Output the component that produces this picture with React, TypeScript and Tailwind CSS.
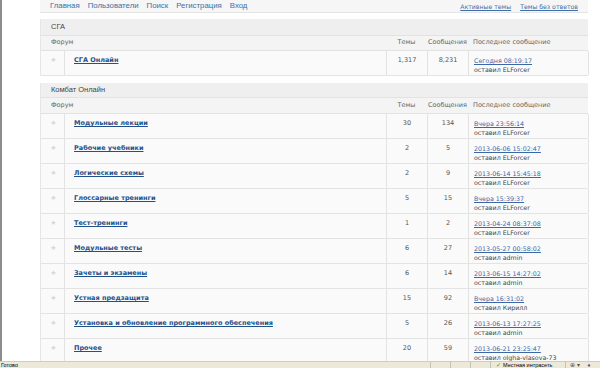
import React from "react";

type Row = { name: string; t: string; m: string; date: string; by: string };

const rows: Row[] = [
  { name: "Модульные лекции", t: "30", m: "134", date: "Вчера 23:56:14", by: "ELForcer" },
  { name: "Рабочие учебники", t: "2", m: "5", date: "2013-06-06 15:02:47", by: "ELForcer" },
  { name: "Логические схемы", t: "2", m: "9", date: "2013-06-14 15:45:18", by: "ELForcer" },
  { name: "Глоссарные тренинги", t: "5", m: "15", date: "Вчера 15:39:37", by: "ELForcer" },
  { name: "Тест-тренинги", t: "1", m: "2", date: "2013-04-24 08:37:08", by: "ELForcer" },
  { name: "Модульные тесты", t: "6", m: "27", date: "2013-05-27 00:58:02", by: "admin" },
  { name: "Зачеты и экзамены", t: "6", m: "14", date: "2013-06-15 14:27:02", by: "admin" },
  { name: "Устная предзащита", t: "15", m: "92", date: "Вчера 16:31:02", by: "Кирилл" },
  { name: "Установка и обновление программного обеспечения", t: "5", m: "26", date: "2013-06-13 17:27:25", by: "admin" },
  { name: "Прочее", t: "20", m: "59", date: "2013-06-21 23:25:47", by: "olgha-vlasova-73" },
];

const verdana = { fontFamily: '"DejaVu Sans", Verdana, sans-serif' };
const arial = { fontFamily: '"Liberation Sans", Arial, sans-serif' };

const cols = "grid grid-cols-[24px_321px_41px_41px_121px]";

function ColHeader({ h }: { h: string }) {
  return (
    <div className={`${cols} ${h} bg-[#f4f4f4] border-b border-[#e2e2e2] text-[6.5px] text-[#666] items-center`} style={verdana}>
      <div className="col-span-2 pl-[10px]">Форум</div>
      <div className="text-center">Темы</div>
      <div className="text-center whitespace-nowrap">Сообщения</div>
      <div className="pl-[5px] whitespace-nowrap">Последнее сообщение</div>
    </div>
  );
}

function ForumRow({ r }: { r: Row }) {
  return (
    <div className={`${cols} h-[25px] bg-[#fafafa] border-b border-[#e3e3e3]`} style={verdana}>
      <div className="border-r border-[#e3e3e3] flex justify-center pl-[2px] pt-[5px] text-[7px] text-[#d6d6d6] leading-[9px]">★</div>
      <div className="pl-[9px] pt-[5px] text-[6.5px] leading-[9px] font-bold text-[#24508a] underline whitespace-nowrap">{r.name}</div>
      <div className="border-l border-[#e3e3e3] text-center pt-[5px] text-[6.5px] leading-[9px] text-[#555]">{r.t}</div>
      <div className="border-l border-[#e3e3e3] text-center pt-[5px] text-[6.5px] leading-[9px] text-[#555]">{r.m}</div>
      <div className="border-l border-r border-[#e3e3e3] pl-[5px] pt-[5px] text-[6.3px] leading-[9px] whitespace-nowrap">
        <div className="text-[#3b67a8] underline">{r.date}</div>
        <div className="text-[#444]">оставил {r.by}</div>
      </div>
    </div>
  );
}

function SectionHeader({ title, h }: { title: string; h: string }) {
  return (
    <div className={`${h} bg-[#efefef] border-b border-[#e2e2e2] flex items-center pl-[10px] text-[7.5px] text-[#444]`} style={arial}>
      {title}
    </div>
  );
}

export default function App() {
  return (
    <div className="w-[600px] h-[368px] overflow-hidden bg-white flex flex-col relative">
      <div className="flex-1 border-l-2 border-[#8c8c8c] min-h-0 overflow-hidden">
        <div className="ml-[38px] w-[548px]">
          <div className="h-[13px] bg-[#f6f6f6] border-b border-[#e4e4e4] flex items-start justify-between pl-[10px] pr-[10px]">
            <div className="flex gap-[8px] text-[7.8px] leading-[11px] text-[#3d6fa6]" style={arial}>
              <span>Главная</span>
              <span>Пользователи</span>
              <span>Поиск</span>
              <span>Регистрация</span>
              <span>Вход</span>
            </div>
            <div className="flex gap-[9px] text-[6.2px] leading-[11px] pt-[1px] text-[#3d6fa6] underline" style={verdana}>
              <span>Активные темы</span>
              <span>Темы без ответов</span>
            </div>
          </div>

          <div className="mt-[6px] border-l border-[#e6e6e6]">
            <SectionHeader title="СГА" h="h-[17px]" />
            <ColHeader h="h-[15px]" />
            <ForumRow r={{ name: "СГА Онлайн", t: "1,317", m: "8,231", date: "Сегодня 08:19:17", by: "ELForcer" }} />
          </div>

          <div className="mt-[7px] border-l border-[#e6e6e6]">
            <SectionHeader title="Комбат Онлайн" h="h-[15px]" />
            <ColHeader h="h-[16px]" />
            {rows.map((r) => (
              <ForumRow key={r.name} r={r} />
            ))}
          </div>
        </div>
      </div>
      <div className="h-[7px] shrink-0 bg-[#ece9d8] border-t border-[#d0cdbf] flex items-start text-[5.5px] leading-[6px] text-black overflow-hidden" style={arial}>
        <div className="pl-[1px] w-[430px]">Готово</div>
        <div className="border-l border-[#c5c2b2] h-full w-[20px]" />
        <div className="border-l border-[#c5c2b2] h-full w-[20px]" />
        <div className="border-l border-[#c5c2b2] h-full w-[20px]" />
        <div className="border-l border-[#c5c2b2] h-full pl-[5px] w-[75px] flex gap-[2px] whitespace-nowrap">
          <span className="text-[#3a9a2a]">✓</span>
          <span>Местная интрасеть</span>
        </div>
        <div className="border-l border-[#c5c2b2] h-full pl-[4px] flex gap-[8px] whitespace-nowrap">
          <span className="text-[#555]">⊕ ▾</span>
          <span className="text-[#2a5aa0]">♦</span>
        </div>
      </div>
    </div>
  );
}
